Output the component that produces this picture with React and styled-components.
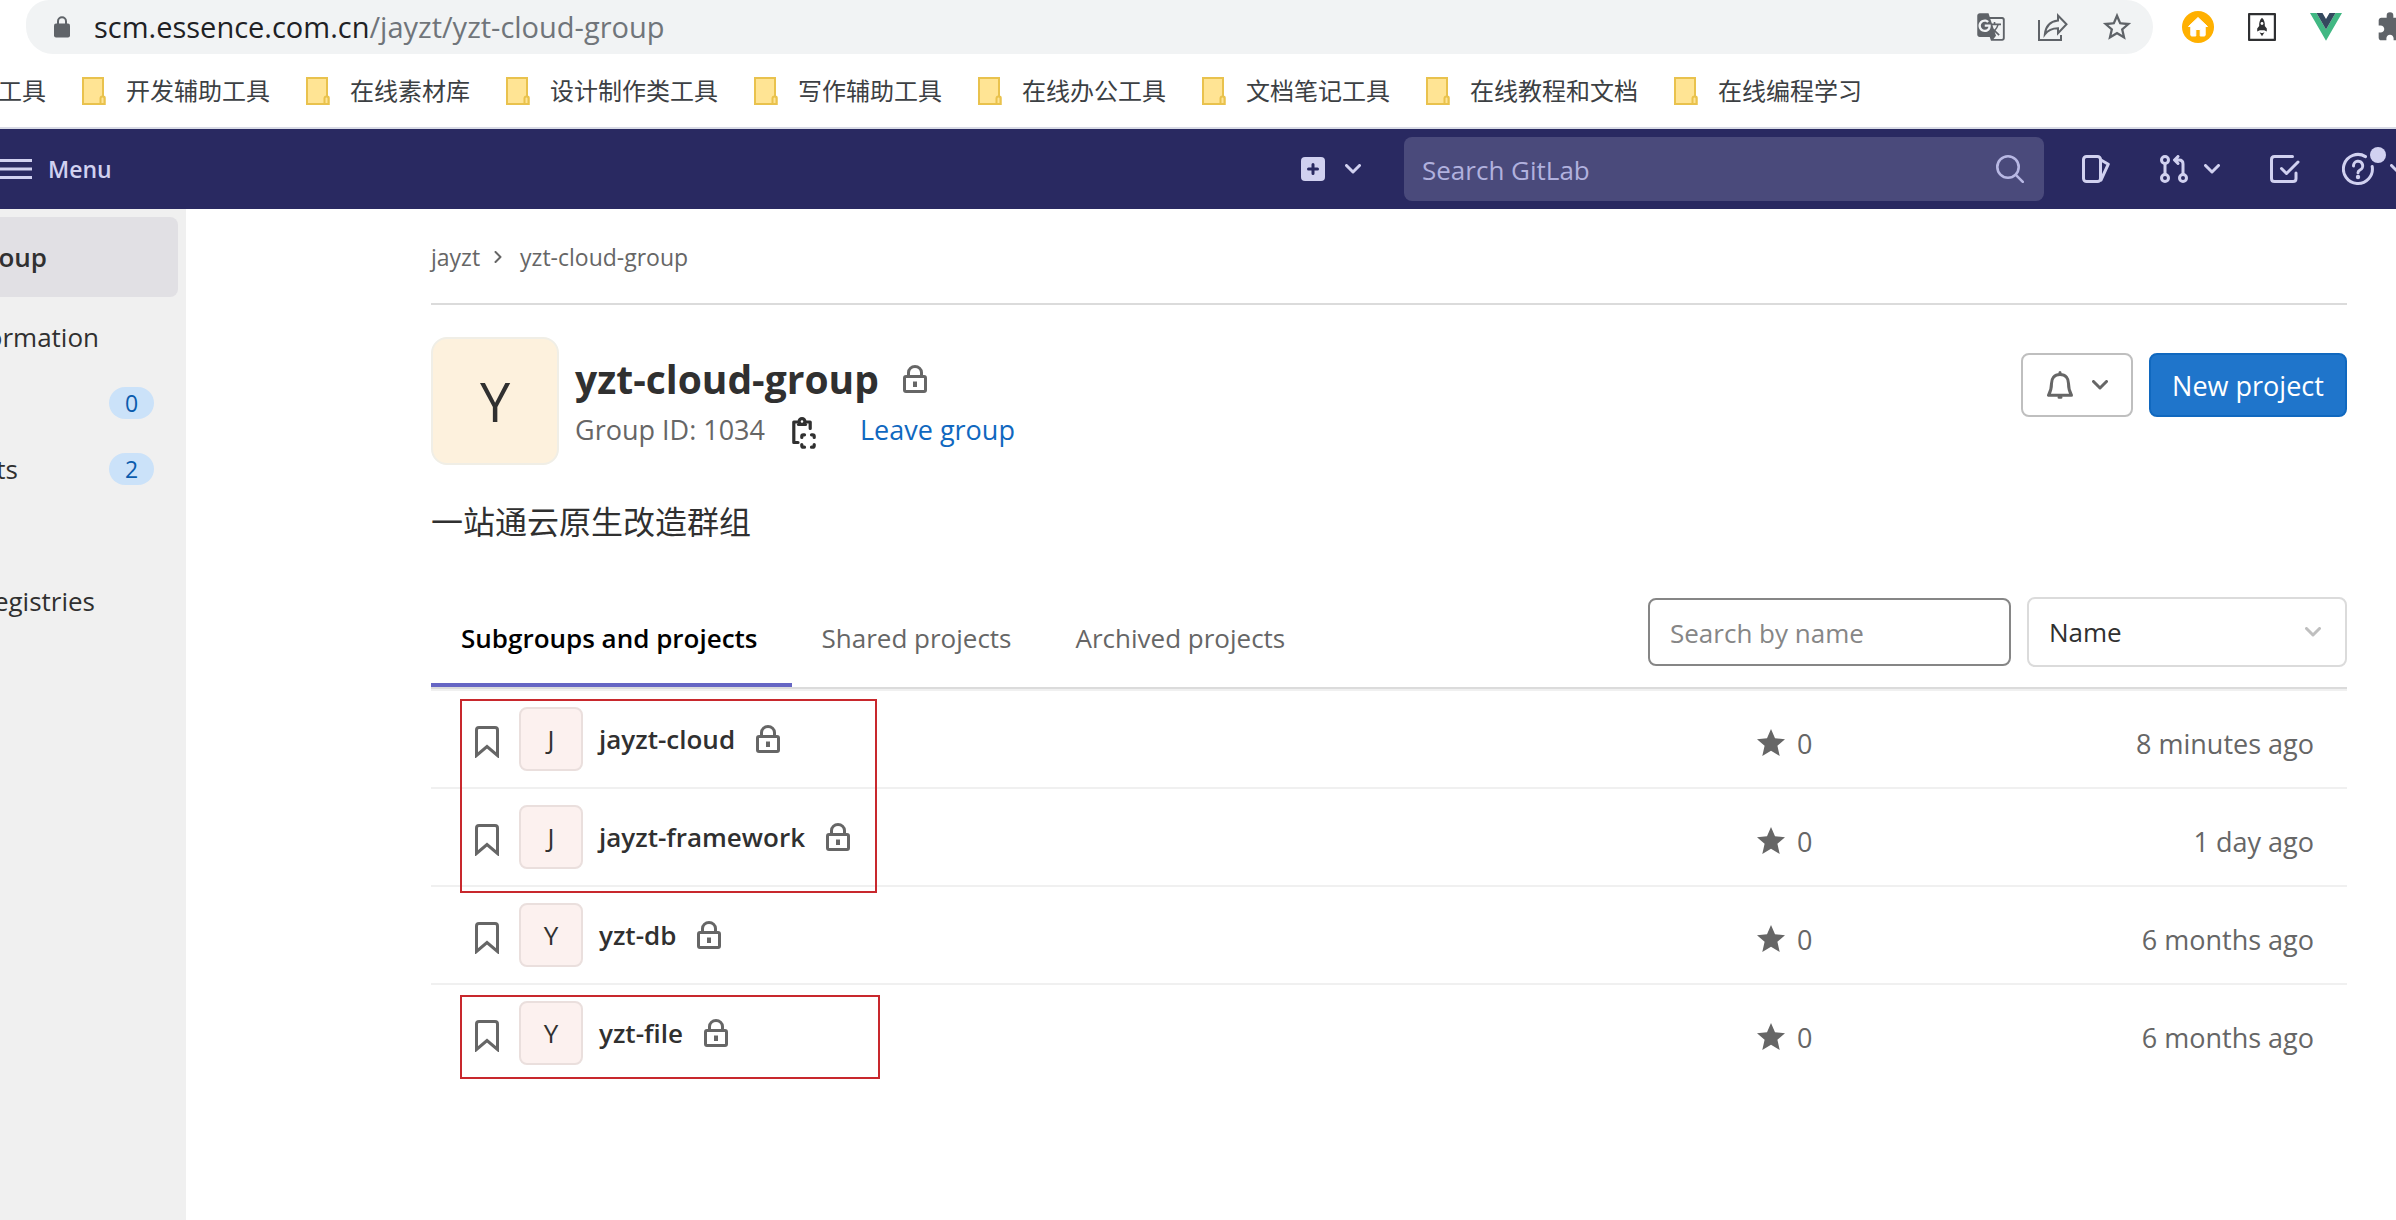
import React from "react";
import styled, { createGlobalStyle, css } from "styled-components";
import { MdGTranslate, MdStarBorder, MdExtension } from "react-icons/md";

const GlobalStyle = createGlobalStyle`
  *, *::before, *::after { box-sizing: border-box; }
  body {
    margin: 0;
    background: #fff;
    color: #303030;
    font-family: "Open Sans", "Noto Sans CJK SC", sans-serif;
    font-size: 26px;
  }
  svg { display: block; flex: none; }
  a { color: inherit; text-decoration: none; }
  button, input, select { font: inherit; }
`;

const Page = styled.div`
  display: flex;
  flex-direction: column;
  min-height: 100vh;
  overflow: hidden;
`;

/* Browser chrome */

const AddressRow = styled.div`
  display: flex;
  height: 54px;
  padding-left: 26px;
`;

const Omnibox = styled.div`
  flex: 1;
  display: flex;
  align-items: center;
  padding: 0 19px 0 28px;
  border-radius: 24px 28px 28px 28px;
  background: #f1f3f4;
  color: #5f6368;
`;

const Url = styled.div`
  flex: 1;
  margin-left: 24px;
  color: #70757a;
  font-size: 29px;
  line-height: 52px;
  white-space: nowrap;

  strong {
    color: #202124;
    font-weight: 400;
  }
`;

const OmniboxActions = styled.div`
  display: flex;
  align-items: center;
  gap: 32px;
`;

const Extensions = styled.div`
  flex: none;
  display: flex;
  align-items: center;
  gap: 34px;
  width: 243px;
  padding-left: 29px;
  overflow: hidden;
`;

const ChromeButton = styled.button`
  display: flex;
  padding: 0;
  border: 0;
  background: none;
  color: #5f6368;
`;

const Bookmarks = styled.nav`
  display: flex;
  align-items: center;
  gap: 36px;
  height: 75px;
  border-bottom: 2px solid #d9dbe6;
  overflow: hidden;
`;

const Bookmark = styled.a`
  flex: none;
  display: flex;
  align-items: center;
  justify-content: flex-end;
  gap: 20px;
  width: ${(p) => (p.$clip ? "46px" : "auto")};
  color: #3c4043;
  font-size: 24px;
  line-height: 36px;
  white-space: nowrap;
`;

/* GitLab top bar */

const Navbar = styled.header`
  display: flex;
  align-items: center;
  justify-content: space-between;
  height: 80px;
  background: #292961;
  color: #d1d1f0;
`;

const NavButton = styled.button`
  position: relative;
  flex: none;
  display: flex;
  align-items: center;
  gap: ${(p) => p.$gap || 16}px;
  padding: 0;
  border: 0;
  background: none;
  color: inherit;
  font-size: 23px;
  font-weight: 600;
`;

/* The help menu runs past the right edge of the window */
const HelpButton = styled(NavButton)`
  width: 54px;
  margin-left: -8px;
  overflow: hidden;
`;

const NavTools = styled.div`
  display: flex;
  align-items: center;
  gap: 43px;
`;

const NavIcons = styled.div`
  display: flex;
  align-items: center;
  gap: 50px;
  margin-left: -5px;
`;

const NavSearch = styled.label`
  display: flex;
  align-items: center;
  width: 640px;
  height: 64px;
  padding: 0 20px 0 18px;
  border-radius: 8px;
  background: #4a4a7b;
  color: #b8b8e4;

  input {
    flex: 1;
    min-width: 0;
    padding: 2px 0 0;
    border: 0;
    outline: 0;
    background: none;
    color: inherit;
  }
  input::placeholder {
    color: #b1b1de;
    opacity: 1;
  }
`;

/* Sidebar */

const Body = styled.div`
  flex: 1;
  display: flex;
`;

const Sidebar = styled.nav`
  flex: none;
  width: 186px;
  padding-top: 8px;
  background: #f0f0f0;
`;

const SideItem = styled.a`
  display: flex;
  align-items: center;
  justify-content: space-between;
  height: 66px;
  margin-right: 8px;
  padding-right: 24px;
  white-space: nowrap;

  ${(p) =>
    p.$active &&
    css`
      height: 80px;
      margin-bottom: 7px;
      border-radius: 0 8px 8px 0;
      background: #e1e0e4;
      font-weight: 600;
    `}
`;

const SideLabel = styled.span`
  display: flex;
  justify-content: flex-end;
  width: ${(p) => p.$visible}px;
  overflow: hidden;
`;

const Badge = styled.span`
  width: 45px;
  border-radius: 16px;
  background: #cbe2f9;
  color: #0b5cad;
  font-size: 23px;
  line-height: 32px;
  text-align: center;
`;

/* Group page */

const Main = styled.main`
  flex: 1;
  min-width: 0;
  padding: 0 49px 0 245px;
`;

const Breadcrumbs = styled.nav`
  display: flex;
  align-items: center;
  gap: 14px;
  height: 96px;
  padding-top: 2px;
  border-bottom: 2px solid #dbdbdb;
  color: #666;
  font-size: 23px;

  svg { margin-right: 4px; }
`;

const GroupHeader = styled.header`
  display: flex;
  align-items: center;
  gap: 16px;
  margin-top: 32px;
`;

const Avatar = styled.span`
  flex: none;
  display: flex;
  align-items: center;
  justify-content: center;
  width: ${(p) => (p.$large ? 128 : 64)}px;
  height: ${(p) => (p.$large ? 128 : 64)}px;
  border: 2px solid ${(p) => (p.$large ? "#f0eee6" : "#eadfdd")};
  border-radius: ${(p) => (p.$large ? 16 : 8)}px;
  background: ${(p) => (p.$large ? "#fdf1dd" : "#fcf1ef")};
  color: #303030;
  font-size: ${(p) => (p.$large ? 54 : 26)}px;
`;

const GroupInfo = styled.div`
  flex: 1;
`;

const GroupTitle = styled.h1`
  display: flex;
  align-items: center;
  gap: 24px;
  margin: 0;
  font-size: 39px;
  font-weight: 700;
  line-height: 58px;
`;

const GroupMeta = styled.div`
  display: flex;
  align-items: center;
  gap: 27px;
  color: #666;
  font-size: 27px;
  line-height: 44px;
`;

const CopyButton = styled.button`
  display: flex;
  margin-right: 17px;
  padding: 0;
  border: 0;
  background: none;
  color: #303030;
`;

const LeaveLink = styled.a`
  color: #1068bf;
`;

const HeaderActions = styled.div`
  align-self: flex-start;
  display: flex;
  gap: 16px;
  margin-top: 16px;
`;

const Button = styled.button`
  display: flex;
  align-items: center;
  justify-content: center;
  gap: 19px;
  width: ${(p) => (p.$primary ? 198 : 112)}px;
  height: 64px;
  padding: 0;
  border: 2px solid ${(p) => (p.$primary ? "#1068bf" : "#bfbfbf")};
  border-radius: 8px;
  background: ${(p) => (p.$primary ? "#1f75cb" : "#fff")};
  color: ${(p) => (p.$primary ? "#fff" : "#666")};
  font-size: 27px;
  white-space: nowrap;
`;

const Description = styled.p`
  margin: 33px 0 47px;
  font-size: 32px;
  line-height: 48px;
`;

const TabsRow = styled.div`
  display: flex;
  align-items: flex-end;
  justify-content: space-between;
  border-bottom: 2px solid #dbdbdb;
`;

const Tabs = styled.nav`
  display: flex;
`;

const Tab = styled.a`
  padding: 0 34px 0 30px;
  border-bottom: 4px solid ${(p) => (p.$active ? "#6666c4" : "transparent")};
  color: ${(p) => (p.$active ? "#000" : "#666")};
  font-weight: ${(p) => (p.$active ? 600 : 400)};
  line-height: 90px;
`;

const Filters = styled.div`
  display: flex;
  align-items: center;
  gap: 16px;
  padding-bottom: 20px;
`;

const FilterInput = styled.input`
  width: 363px;
  height: 68px;
  padding: 2px 20px 0;
  border: 2px solid #868686;
  border-radius: 8px;
  background: #fff;

  &::placeholder {
    color: #868686;
    opacity: 1;
  }
`;

const SortBox = styled.div`
  position: relative;

  svg {
    position: absolute;
    right: 26px;
    top: 30px;
    color: #bfbfbf;
    pointer-events: none;
  }
`;

const SortSelect = styled.select`
  display: block;
  appearance: none;
  width: 320px;
  height: 70px;
  padding: 0 20px;
  border: 2px solid #dbdbdb;
  border-radius: 8px;
  background: #fff;
  color: #303030;
`;

const ListArea = styled.div`
  position: relative;
`;

const ProjectList = styled.ul`
  margin: 0;
  padding: 0;
  border-top: 2px solid #f0f0f0;
  list-style: none;
`;

const ProjectRow = styled.li`
  display: flex;
  align-items: center;
  height: 98px;
  padding: 0 33px 0 44px;
  border-bottom: 2px solid #f0f0f0;
  color: #666;
  font-size: 27px;

  &:last-child { border-bottom-color: transparent; }
`;

const ProjectName = styled.a`
  margin: 0 21px 0 16px;
  color: #303030;
  font-size: 26px;
  font-weight: 600;
`;

const BookmarkSlot = styled.button`
  margin: 0 20px 0 0;
  padding: 0;
  border: 0;
  background: none;
  color: inherit;
`;

const Stars = styled.span`
  display: flex;
  align-items: center;
  gap: 12px;
  width: 200px;
  margin-left: auto;
  padding-top: 8px;
`;

const Updated = styled.time`
  width: 357px;
  padding-top: 8px;
  text-align: right;
`;

/* Red frames drawn over the list */
const Highlight = styled.div`
  position: absolute;
  left: 29px;
  top: ${(p) => p.$top}px;
  width: ${(p) => p.$width}px;
  height: ${(p) => p.$height}px;
  border: 2px solid #c8282d;
  pointer-events: none;
`;

/* Icons */

const stroke = (width) => ({
  fill: "none",
  stroke: "currentColor",
  strokeWidth: width,
  strokeLinecap: "round",
  strokeLinejoin: "round",
});

const Chevron = () => (
  <svg width="16" height="10" viewBox="0 0 16 10" {...stroke(3)}>
    <path d="M1.5 1.5 8 8l6.5-6.5" />
  </svg>
);

const CrumbChevron = () => (
  <svg width="8" height="12" viewBox="0 0 8 12" {...stroke(2)}>
    <path d="m1.5 1 5 5-5 5" />
  </svg>
);

const SiteLock = () => (
  <svg width="16" height="22" viewBox="0 0 16 22">
    <path d="M4 9V5.2a4 4 0 0 1 8 0V9" fill="none" stroke="currentColor" strokeWidth="2" />
    <rect y="7.500" width="16" height="14" rx="2" fill="currentColor" />
  </svg>
);

const Share = () => (
  <svg width="30" height="28" viewBox="0 0 30 28" fill="none" stroke="currentColor" strokeWidth="2">
    <path d="M1 7v20h22v-5" />
    <path d="M20 2.500v5C11 8.500 7.500 14 6.800 21.500 10 17 14 15.200 20 15.200v5l8.500-9z" />
  </svg>
);

const Folder = () => (
  <svg width="24" height="28" viewBox="0 0 24 28" fill="#ffe494" stroke="#e9c24d" strokeWidth="2">
    <path d="M1 1h20v18l1.500 1v7H1z" />
    <path d="M18.500 27v-5.500q0-2 2-2t2 2V27z" />
  </svg>
);

const HomeExt = () => (
  <svg width="32" height="32" viewBox="0 0 32 32">
    <circle cx="16" cy="16" r="16" fill="#ffb000" />
    <path
      d="M16 6.500 6.500 15.500h2.300V24q0 1 1 1h4v-6.500h4.400V25h4q1 0 1-1v-8.500h2.300z"
      fill="#fff"
      stroke="#fff"
      strokeLinejoin="round"
    />
  </svg>
);

const RocketExt = () => (
  <svg width="28" height="28" viewBox="0 0 28 28">
    <rect x="1" y="1" width="26" height="26" rx="1" fill="#fff" stroke="#2f3032" strokeWidth="2.400" />
    <path d="M14 4.800c2.500 2.200 3 5.400 2.800 8.200l2 2.500v3l-2.600-1.300h-4.400l-2.600 1.300v-3l2-2.500c-.2-2.800.3-6 2.800-8.200z" fill="#2f3032" />
    <circle cx="14" cy="10.500" r="1.400" fill="#fff" />
    <path d="m11.500 19.200 2.500 4 2.500-4-1.700.9h-1.600z" fill="#2f3032" />
  </svg>
);

const VueExt = () => (
  <svg width="32" height="28" viewBox="0 0 32 28">
    <path d="M0 0h6.500L16 16.500 25.500 0H32L16 27.700z" fill="#41b883" />
    <path d="M6.500 0h6L16 6l3.500-6h6L16 16.500z" fill="#34495e" />
  </svg>
);

const Hamburger = () => (
  <svg width="32" height="22" viewBox="0 0 32 22" {...stroke(3)} strokeLinecap="butt">
    <path d="M0 2.500h32M0 11h32M0 19.500h32" />
  </svg>
);

const PlusSquare = () => (
  <svg width="24" height="24" viewBox="0 0 24 24">
    <rect width="24" height="24" rx="4" fill="currentColor" />
    <path d="M12 7.500v9M7.500 12h9" stroke="#292961" strokeWidth="3" strokeLinecap="round" />
  </svg>
);

const SearchIcon = () => (
  <svg width="28" height="28" viewBox="0 0 28 28" {...stroke(2.6)}>
    <circle cx="12" cy="12" r="10.700" />
    <path d="m19.800 19.800 7 7" />
  </svg>
);

const IssuesIcon = () => (
  <svg width="28" height="28" viewBox="0 0 28 28" {...stroke(3)}>
    <rect x="1.500" y="1.500" width="17" height="25" rx="3" />
    <path d="m19 5 7.300 4.200L19 25" />
  </svg>
);

const MergeIcon = () => (
  <svg width="28" height="28" viewBox="0 0 28 28" {...stroke(3)}>
    <circle cx="5" cy="5" r="3.500" />
    <circle cx="5" cy="23" r="3.500" />
    <circle cx="23" cy="23" r="3.500" />
    <path d="M5 8.500v11M23 19.500V9q0-4-4-4h-4M18 1.500 14.500 5 18 8.500" />
  </svg>
);

const TodoIcon = () => (
  <svg width="30" height="28" viewBox="0 0 30 28" {...stroke(3)}>
    <path d="M22.500 1.500h-18q-3 0-3 3v19q0 3 3 3H23q3 0 3-3V18" />
    <path d="m11.500 13.500 5 5L28 7" />
  </svg>
);

const HelpIcon = () => (
  <svg width="38" height="44" viewBox="0 0 38 44">
    <g {...stroke(3)}>
      <path d="M23.500 9.600A14.500 14.500 0 1 0 30.200 19.500" />
      <path d="M11.500 19a4.600 4.600 0 1 1 6.500 4c-1.500.8-2 1.300-2 2.700" />
    </g>
    <circle cx="16" cy="30" r="2.200" fill="currentColor" />
  </svg>
);

const Dot = styled.span`
  position: absolute;
  left: 28px;
  top: 0;
  width: 16px;
  height: 16px;
  border-radius: 50%;
  background: #d1d1f0;
`;

const Lock = () => (
  <svg width="24" height="28" viewBox="0 0 24 28" {...stroke(3)} color="#666">
    <path d="M5.500 11V7.500a6.500 6 0 0 1 13 0V11" />
    <rect x="1.500" y="11.500" width="21" height="15" rx="1.500" />
    <path d="M12 16.500v5.500" strokeLinecap="butt" strokeWidth="4" />
  </svg>
);

const CopyIcon = () => (
  <svg width="24" height="38" viewBox="0 0 24 38" {...stroke(3.2)}>
    <path d="M5.500 11H1.800v20.500H6" />
    <path d="M14 11h4.200v6.500" />
    <circle cx="10" cy="10.500" r="2.900" />
    <path d="M6.500 13.500h7" />
    <path d="M9.800 26.500v-1.200q0-1.500 1.500-1.500h1.200M19.500 23.800h1.200q1.500 0 1.500 1.500v1.200M22.200 33.500v1.200q0 1.500-1.500 1.500h-1.200M12.500 36.200h-1.200q-1.500 0-1.500-1.500v-1.200" />
  </svg>
);

const BookmarkIcon = () => (
  <svg width="24" height="38" viewBox="0 0 24 38" {...stroke(3)} strokeLinejoin="miter">
    <path d="M1.500 35.500V10q0-2.500 2.500-2.500h16q2.500 0 2.500 2.500v25.500L12 26.500z" />
  </svg>
);

const Bell = () => (
  <svg width="26" height="28" viewBox="0 0 26 28" {...stroke(3)}>
    <path d="M13 3.500c-6 0-8.500 4-8.500 9 0 6-1 8.300-3 11.800h23c-2-3.500-3-5.800-3-11.800 0-5-2.500-9-8.500-9z" />
    <path d="M13 1.500v1M12 26.200h2" />
  </svg>
);

const StarSolid = () => (
  <svg width="28" height="28" viewBox="0 0 28 28" fill="#666">
    <path d="m14 0 4 9.300 10 .9-7.600 6.600L22.700 27 14 21.800 5.300 27l2.300-10.200L0 10.200l10-.9z" />
  </svg>
);

/* Data */

const bookmarks = [
  "开发辅助工具",
  "在线素材库",
  "设计制作类工具",
  "写作辅助工具",
  "在线办公工具",
  "文档笔记工具",
  "在线教程和文档",
  "在线编程学习",
];

const sideItems = [
  { label: "oup", visible: 47, active: true },
  { label: "ormation", visible: 99 },
  { label: "", visible: 0, count: 0 },
  { label: "ts", visible: 18, count: 2 },
  { label: "", visible: 0 },
  { label: "egistries", visible: 95 },
];

const projects = [
  { letter: "J", name: "jayzt-cloud", updated: "8 minutes ago" },
  { letter: "J", name: "jayzt-framework", updated: "1 day ago" },
  { letter: "Y", name: "yzt-db", updated: "6 months ago" },
  { letter: "Y", name: "yzt-file", updated: "6 months ago" },
];

export default function App() {
  return (
    <Page>
      <GlobalStyle />

      <AddressRow>
        <Omnibox>
          <SiteLock />
          <Url>
            <strong>scm.essence.com.cn</strong>/jayzt/yzt-cloud-group
          </Url>
          <OmniboxActions>
            <ChromeButton aria-label="Translate"><MdGTranslate size={30} /></ChromeButton>
            <ChromeButton aria-label="Share"><Share /></ChromeButton>
            <ChromeButton aria-label="Bookmark"><MdStarBorder size={34} /></ChromeButton>
          </OmniboxActions>
        </Omnibox>
        <Extensions>
          <ChromeButton aria-label="Home"><HomeExt /></ChromeButton>
          <ChromeButton aria-label="Launcher"><RocketExt /></ChromeButton>
          <ChromeButton aria-label="Vue devtools"><VueExt /></ChromeButton>
          <ChromeButton aria-label="Extensions"><MdExtension size={32} /></ChromeButton>
        </Extensions>
      </AddressRow>

      <Bookmarks>
        <Bookmark href="#" $clip>工具</Bookmark>
        {bookmarks.map((name) => (
          <Bookmark href="#" key={name}>
            <Folder />
            {name}
          </Bookmark>
        ))}
      </Bookmarks>

      <Navbar>
        <NavButton><Hamburger />Menu</NavButton>
        <NavTools>
          <NavButton aria-label="Create new" $gap={20}><PlusSquare /><Chevron /></NavButton>
          <NavSearch>
            <input type="text" placeholder="Search GitLab" aria-label="Search GitLab" />
            <SearchIcon />
          </NavSearch>
          <NavIcons>
            <NavButton aria-label="Issues"><IssuesIcon /></NavButton>
            <NavButton aria-label="Merge requests"><MergeIcon /><Chevron /></NavButton>
            <NavButton aria-label="To-do list"><TodoIcon /></NavButton>
            <HelpButton aria-label="Help" $gap={10}><HelpIcon /><Chevron /><Dot /></HelpButton>
          </NavIcons>
        </NavTools>
      </Navbar>

      <Body>
        <Sidebar>
          {sideItems.map((item, i) => (
            <SideItem href="#" key={i} $active={item.active}>
              <SideLabel $visible={item.visible}>{item.label}</SideLabel>
              {item.count !== undefined && <Badge>{item.count}</Badge>}
            </SideItem>
          ))}
        </Sidebar>

        <Main>
          <Breadcrumbs>
            <a href="#">jayzt</a>
            <CrumbChevron />
            <a href="#">yzt-cloud-group</a>
          </Breadcrumbs>

          <GroupHeader>
            <Avatar $large>Y</Avatar>
            <GroupInfo>
              <GroupTitle>yzt-cloud-group<Lock /></GroupTitle>
              <GroupMeta>
                <span>Group ID: 1034</span>
                <CopyButton aria-label="Copy group ID"><CopyIcon /></CopyButton>
                <LeaveLink href="#">Leave group</LeaveLink>
              </GroupMeta>
            </GroupInfo>
            <HeaderActions>
              <Button aria-label="Notification setting"><Bell /><Chevron /></Button>
              <Button $primary>New project</Button>
            </HeaderActions>
          </GroupHeader>

          <Description>一站通云原生改造群组</Description>

          <TabsRow>
            <Tabs>
              <Tab href="#" $active>Subgroups and projects</Tab>
              <Tab href="#">Shared projects</Tab>
              <Tab href="#">Archived projects</Tab>
            </Tabs>
            <Filters>
              <FilterInput type="text" placeholder="Search by name" aria-label="Search by name" />
              <SortBox>
                <SortSelect aria-label="Sort by" defaultValue="Name">
                  <option>Name</option>
                </SortSelect>
                <Chevron />
              </SortBox>
            </Filters>
          </TabsRow>

          <ListArea>
            <ProjectList>
              {projects.map((p) => (
                <ProjectRow key={p.name}>
                  <BookmarkSlot aria-label={`Bookmark ${p.name}`}><BookmarkIcon /></BookmarkSlot>
                  <Avatar>{p.letter}</Avatar>
                  <ProjectName href="#">{p.name}</ProjectName>
                  <Lock />
                  <Stars><StarSolid />0</Stars>
                  <Updated>{p.updated}</Updated>
                </ProjectRow>
              ))}
            </ProjectList>
            <Highlight $top={10} $width={417} $height={194} />
            <Highlight $top={306} $width={420} $height={84} />
          </ListArea>
        </Main>
      </Body>
    </Page>
  );
}
